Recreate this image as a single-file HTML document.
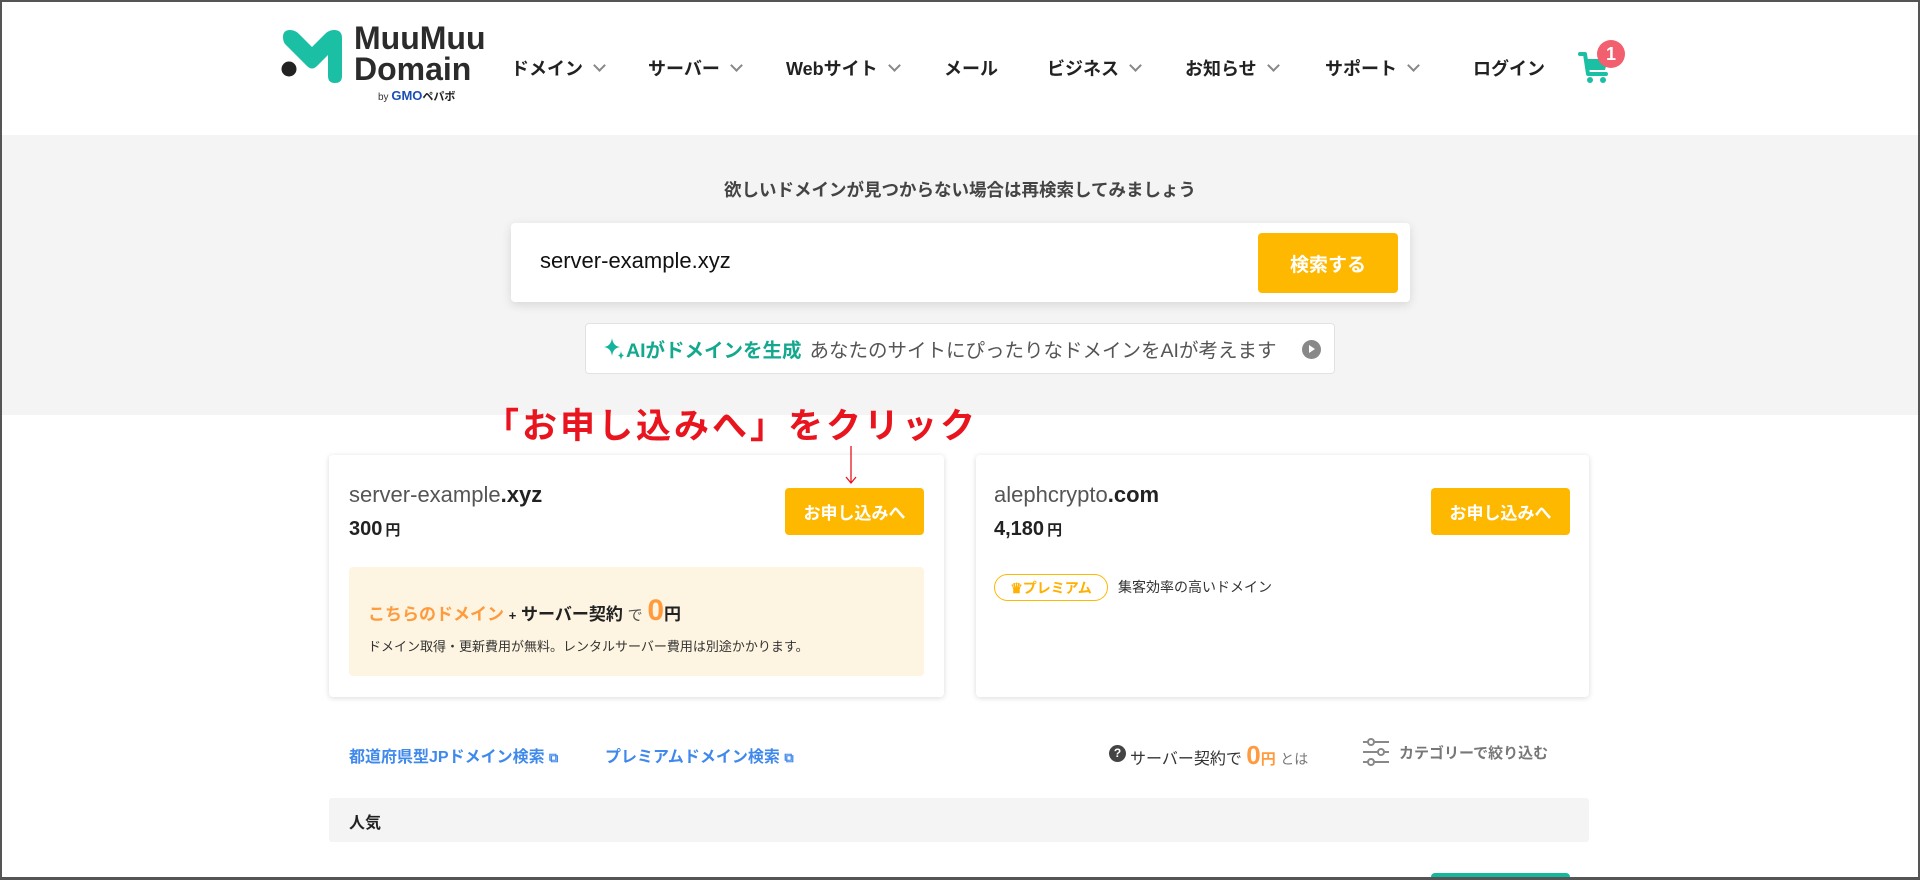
<!DOCTYPE html>
<html><head><meta charset="utf-8"><style>
*{box-sizing:border-box;margin:0;padding:0}
html,body{width:1920px;height:880px;overflow:hidden}
body{background:#fff;font-family:"Liberation Sans","Noto Sans CJK JP",sans-serif;color:#222;position:relative}
.frame{position:absolute;left:0;top:0;width:1920px;height:880px;border:2px solid #555;border-bottom-width:3px;pointer-events:none;z-index:10}
.abs{position:absolute}
.nav{position:absolute;top:55px;font-size:18px;font-weight:bold;color:#222;white-space:nowrap}
.chev{display:inline-block;width:9px;height:9px;border-right:2px solid #888;border-bottom:2px solid #888;transform:rotate(45deg);margin-left:12px;position:relative;top:-5px}
.gray{position:absolute;left:0;top:135px;width:1920px;height:280px;background:#f4f4f4}
.card{position:absolute;top:455px;height:242px;background:#fff;border-radius:4px;box-shadow:0 1px 6px rgba(0,0,0,.15)}
.btn{position:absolute;background:#ffb800;color:#fff;font-weight:bold;font-size:17px;border-radius:4px;display:flex;align-items:center;justify-content:center}
</style></head><body>
<div class="frame"></div>
<!-- logo -->
<svg class="abs" style="left:279px;top:29px" width="70" height="56" viewBox="0 0 70 56">
<path d="M4 8 Q4 1 11 1 Q16 1 20 5 L33 18 L46 5 Q50 1 55 1 Q63 1 63 9 L63 47 Q63 54 56 54 Q49 54 49 47 L49 26 L38 37 Q33 42 28 37 L6 15 Q4 12 4 8 Z" fill="#1bbfa3"/>
<circle cx="10" cy="40" r="7.5" fill="#222"/>
</svg>
<div class="abs" style="left:354px;top:23px;font-size:32px;font-weight:bold;line-height:31px;color:#2b2b2b">MuuMuu<br>Domain</div>
<div class="abs" style="left:378px;top:88px;font-size:10px;color:#333;white-space:nowrap">by <b style="color:#1a4fb5;font-size:13px">GMO</b><b style="font-size:11px;color:#222">ペパボ</b></div>
<!-- nav -->
<div class="nav" style="left:511px">ドメイン<span class="chev"></span></div>
<div class="nav" style="left:648px">サーバー<span class="chev"></span></div>
<div class="nav" style="left:786px">Webサイト<span class="chev"></span></div>
<div class="nav" style="left:944px">メール</div>
<div class="nav" style="left:1047px">ビジネス<span class="chev"></span></div>
<div class="nav" style="left:1185px">お知らせ<span class="chev"></span></div>
<div class="nav" style="left:1325px">サポート<span class="chev"></span></div>
<div class="nav" style="left:1473px">ログイン</div>
<svg class="abs" style="left:1578px;top:50px" width="34" height="34" viewBox="0 0 34 34">
<path d="M2 4 L7 4 L10 24 L28 24" fill="none" stroke="#1bbfa3" stroke-width="4" stroke-linecap="round" stroke-linejoin="round"/>
<path d="M8 9 L30 9 L27 20 L10 20 Z" fill="#1bbfa3"/>
<circle cx="12" cy="30" r="3" fill="#1bbfa3"/><circle cx="25" cy="30" r="3" fill="#1bbfa3"/>
</svg>
<div class="abs" style="left:1597px;top:40px;width:28px;height:28px;border-radius:50%;background:#f25f6e;color:#fff;font-weight:bold;font-size:18px;display:flex;align-items:center;justify-content:center">1</div>
<!-- gray search area -->
<div class="gray"></div>
<div class="abs" style="left:0;width:1920px;top:177px;text-align:center;font-size:17.5px;font-weight:bold;color:#444">欲しいドメインが見つからない場合は再検索してみましょう</div>
<div class="abs" style="left:511px;top:223px;width:899px;height:79px;background:#fff;border-radius:4px;box-shadow:0 3px 10px rgba(0,0,0,.12)"></div>
<div class="abs" style="left:540px;top:248px;font-size:22px;color:#111">server-example.xyz</div>
<div class="btn" style="left:1258px;top:233px;width:140px;height:60px;font-size:19px">検索する</div>
<div class="abs" style="left:585px;top:323px;width:750px;height:51px;background:#fff;border:1px solid #e2e2e2;border-radius:4px"></div>
<svg class="abs" style="left:603px;top:336px" width="22" height="24" viewBox="0 0 22 24"><path d="M9 2 Q10 10 17 11 Q10 12 9 20 Q8 12 1 11 Q8 10 9 2Z" fill="#14b39b"/><path d="M18 15 Q18.5 19 21 19.5 Q18.5 20 18 24 Q17.5 20 15 19.5 Q17.5 19 18 15Z" fill="#14b39b"/></svg>
<div class="abs" style="left:626px;top:334px;font-size:19.5px;white-space:nowrap"><b style="color:#14a88f">AIがドメインを生成</b><span style="color:#555;margin-left:8px">あなたのサイトにぴったりなドメインをAIが考えます</span></div>
<div class="abs" style="left:1302px;top:340px;width:19px;height:19px;border-radius:50%;background:#888"></div>
<div class="abs" style="left:1309px;top:345px;width:0;height:0;border-left:6px solid #fff;border-top:4.5px solid transparent;border-bottom:4.5px solid transparent"></div>
<!-- card1 -->
<div class="card" style="left:329px;width:615px"></div>
<div class="abs" style="left:349px;top:482px;font-size:22px;color:#555">server-example<b style="color:#222">.xyz</b></div>
<div class="abs" style="left:349px;top:518px;font-size:20px;font-weight:bold;color:#222">300<span style="font-size:15px;margin-left:3px">円</span></div>
<div class="btn" style="left:785px;top:488px;width:139px;height:47px">お申し込みへ</div>
<div class="abs" style="left:349px;top:567px;width:575px;height:109px;background:#fdf4e1;border-radius:4px"></div>
<div class="abs" style="left:368px;top:594px;font-size:17px;font-weight:bold;white-space:nowrap"><span style="color:#ff9a3d">こちらのドメイン</span> <span style="font-size:13px">+</span> サーバー契約 <span style="font-weight:normal;color:#555;font-size:15px">で</span> <span style="color:#ff9a3d;font-size:30px">0</span>円</div>
<div class="abs" style="left:368px;top:636px;font-size:13px;color:#333">ドメイン取得・更新費用が無料。レンタルサーバー費用は別途かかります。</div>
<!-- card2 -->
<div class="card" style="left:976px;width:613px"></div>
<div class="abs" style="left:994px;top:482px;font-size:22px;color:#555">alephcrypto<b style="color:#222">.com</b></div>
<div class="abs" style="left:994px;top:518px;font-size:20px;font-weight:bold;color:#222">4,180<span style="font-size:15px;margin-left:3px">円</span></div>
<div class="btn" style="left:1431px;top:488px;width:139px;height:47px">お申し込みへ</div>
<div class="abs" style="left:994px;top:574px;width:114px;height:27px;border:1.5px solid #ffb800;border-radius:14px;color:#ffb000;font-weight:bold;font-size:14px;display:flex;align-items:center;justify-content:center">♛プレミアム</div>
<div class="abs" style="left:1118px;top:577px;font-size:14px;color:#333">集客効率の高いドメイン</div>
<!-- annotation -->
<div class="abs" style="left:484px;top:398px;font-size:35px;font-weight:bold;color:#e8141e;letter-spacing:3px;white-space:nowrap;z-index:5">「お申し込みへ」をクリック</div>
<svg class="abs" style="left:844px;top:446px;z-index:5" width="14" height="40" viewBox="0 0 14 40"><path d="M7 0 L7 37 M2 31 L7 37 L12 31" fill="none" stroke="#e8141e" stroke-width="1.3"/></svg>
<!-- links row -->
<div class="abs" style="left:349px;top:743px;font-size:16px;font-weight:bold;color:#3f88ec;white-space:nowrap">都道府県型JPドメイン検索 <span style="font-size:13px">⧉</span></div>
<div class="abs" style="left:605px;top:743px;font-size:16px;font-weight:bold;color:#3f88ec;white-space:nowrap">プレミアムドメイン検索 <span style="font-size:13px">⧉</span></div>
<div class="abs" style="left:1109px;top:745px;width:17px;height:17px;border-radius:50%;background:#444;color:#fff;font-size:12px;font-weight:bold;text-align:center;line-height:17px">?</div>
<div class="abs" style="left:1130px;top:740px;font-size:16px;color:#333;white-space:nowrap">サーバー契約で <b style="color:#ff9a3d;font-size:26px">0</b><b style="color:#ff9a3d;font-size:15px">円</b> <span style="color:#777;font-size:14px">とは</span></div>
<svg class="abs" style="left:1361px;top:737px" width="30" height="30" viewBox="0 0 30 30"><g stroke="#888" stroke-width="2" fill="none"><path d="M2 5H28M2 15H28M2 25H28"/><circle cx="10" cy="5" r="3" fill="#fff"/><circle cx="20" cy="15" r="3" fill="#fff"/><circle cx="10" cy="25" r="3" fill="#fff"/></g></svg>
<div class="abs" style="left:1399px;top:742px;font-size:15px;font-weight:bold;color:#777">カテゴリーで絞り込む</div>
<!-- popular bar -->
<div class="abs" style="left:329px;top:798px;width:1260px;height:44px;background:#f4f4f4;border-radius:3px"></div>
<div class="abs" style="left:349px;top:809px;font-size:16px;font-weight:bold;color:#222">人気</div>
<div class="abs" style="left:1431px;top:873px;width:139px;height:5px;background:#14b89d;border-radius:4px 4px 0 0"></div>
</body></html>
